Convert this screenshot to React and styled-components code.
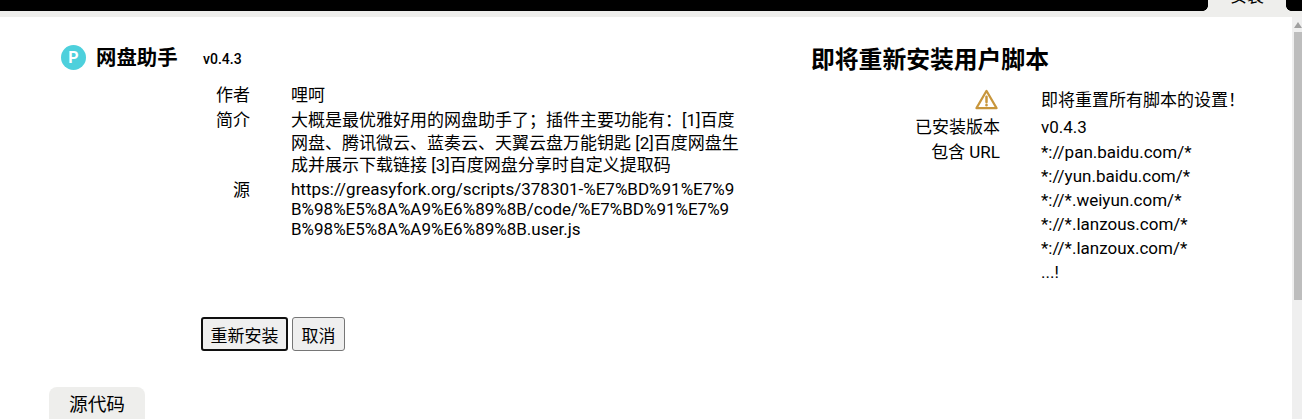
import React from "react";
import styled, { createGlobalStyle } from "styled-components";

const GlobalStyle = createGlobalStyle`
  html, body {
    margin: 0;
    height: 419px;
    overflow: hidden;
    background: #fff;
    color: #000;
    font-family: Roboto, "Noto Sans CJK SC", sans-serif;
    font-size: 17px;
  }
`;

const Page = styled.div`
  display: flex;
  flex-direction: column;
  height: 419px;
  overflow: hidden;
`;

const TopBar = styled.div`
  flex: none;
  height: 11px;
  background: #000;
  display: flex;
  justify-content: flex-end;
  padding-right: 16px;
`;

const TopTab = styled.div`
  position: relative;
  width: 78px;
  height: 11px;
  background: #eeeeec;
  text-align: center;
  line-height: 20px;

  &::before,
  &::after {
    content: "";
    position: absolute;
    bottom: 0;
    width: 5px;
    height: 5px;
  }
  &::before {
    left: -5px;
    background: radial-gradient(circle at 0 0, transparent 4.5px, #eeeeec 5px);
  }
  &::after {
    right: -5px;
    background: radial-gradient(circle at 100% 0, transparent 4.5px, #eeeeec 5px);
  }
`;

const TopTabLabel = styled.div`
  height: 11px;
  overflow: hidden;
  & > span {
    display: block;
    margin-top: -14px;
  }
`;

const Strip = styled.div`
  flex: none;
  height: 6px;
  background: #eeeeec;
`;

const Body = styled.div`
  flex: 1;
  display: flex;
  min-height: 0;
`;

const Main = styled.div`
  flex: 1;
  min-width: 0;
  padding-left: 49px;
`;

const Scrollbar = styled.div`
  flex: none;
  width: 10px;
  background: #efefef;
  display: flex;
  flex-direction: column;
  align-items: flex-end;
`;

const ScrollArrow = styled.div`
  height: 15px;
  width: 8px;
  display: flex;
  align-items: center;
  justify-content: center;
`;

const ScrollThumb = styled.div`
  width: 8px;
  height: 268px;
  background: #bdbdbd;
`;

const Columns = styled.div`
  display: flex;
  height: 370px;
`;

const LeftColumn = styled.div`
  width: 762px;
  flex: none;
  padding-top: 26px;
  padding-left: 12px;
  box-sizing: border-box;
`;

const TitleRow = styled.div`
  display: flex;
  align-items: center;
  height: 28px;
`;

const Logo = styled.div`
  width: 25px;
  height: 25px;
  border-radius: 50%;
  background: #4dd0dc;
  color: #fff;
  font-size: 16px;
  font-weight: 700;
  line-height: 25px;
  text-align: center;
  margin-right: 10px;
`;

const AppName = styled.div`
  font-size: 20.4px;
  font-weight: 700;
  width: 107px;
  margin-bottom: 2px;
`;

const Version = styled.div`
  font-size: 14px;
  font-weight: 500;
  margin-top: 3px;
`;

const InfoGrid = styled.div`
  display: grid;
  grid-template-columns: 189px 1fr;
  column-gap: 41px;
  row-gap: ${(p) => p.$rowGap}px;
  margin-top: ${(p) => p.$top}px;
`;

const Label = styled.div`
  text-align: right;
  line-height: ${(p) => p.$lineHeight || "22.5px"};
`;

const Value = styled.div`
  width: 450px;
  line-height: ${(p) => p.$lineHeight || "22.5px"};
  word-break: break-all;
`;

const UrlList = styled.div`
  display: flex;
  flex-direction: column;
  gap: 4px;
`;

const Actions = styled.div`
  display: flex;
  gap: 4px;
  margin-top: 78px;
  margin-left: 140px;
`;

const Button = styled.button`
  height: 34px;
  padding: 0 ${(p) => (p.$primary ? 7.5 : 8.5)}px;
  box-sizing: border-box;
  background: #efefef;
  border: ${(p) => (p.$primary ? "2px solid #101010" : "1px solid #767676")};
  border-radius: 3px;
  font: inherit;
  color: #000;
`;

const RightColumn = styled.div`
  flex: 1;
  min-width: 0;
  padding-top: 27px;
`;

const Heading = styled.h2`
  margin: 0;
  font-size: 23.8px;
  font-weight: 700;
  line-height: 32px;
`;

const Warning = styled.svg`
  display: block;
  width: 23px;
  height: 23px;
  margin-left: auto;
  margin-right: 2px;
  margin-bottom: 1px;
`;

const Tab = styled.div`
  width: 96px;
  height: 40px;
  background: #eeeeec;
  border-radius: 8px 8px 0 0;
  text-align: center;
  font-size: 18.7px;
  line-height: 37px;
`;

const urls = [
  "*://pan.baidu.com/*",
  "*://yun.baidu.com/*",
  "*://*.weiyun.com/*",
  "*://*.lanzous.com/*",
  "*://*.lanzoux.com/*",
  "...!",
];

export default function App() {
  return (
    <Page>
      <GlobalStyle />
      <TopBar>
        <TopTab>
          <TopTabLabel>
            <span>安装</span>
          </TopTabLabel>
        </TopTab>
      </TopBar>
      <Strip />
      <Body>
        <Main>
          <Columns>
            <LeftColumn>
              <TitleRow>
                <Logo>P</Logo>
                <AppName>网盘助手</AppName>
                <Version>v0.4.3</Version>
              </TitleRow>
              <InfoGrid $rowGap={2.5} $top={13}>
                <Label>作者</Label>
                <Value>哩呵</Value>
                <Label>简介</Label>
                <Value>
                  大概是最优雅好用的网盘助手了；插件主要功能有：[1]百度网盘、腾讯微云、蓝奏云、天翼云盘万能钥匙 [2]百度网盘生成并展示下载链接 [3]百度网盘分享时自定义提取码
                </Value>
                <Label>源</Label>
                <Value $lineHeight="20px">
                  https://greasyfork.org/scripts/378301-%E7%BD%91%E7%9B%98%E5%8A%A9%E6%89%8B/code/%E7%BD%91%E7%9B%98%E5%8A%A9%E6%89%8B.user.js
                </Value>
              </InfoGrid>
              <Actions>
                <Button $primary>重新安装</Button>
                <Button>取消</Button>
              </Actions>
            </LeftColumn>
            <RightColumn>
              <Heading>即将重新安装用户脚本</Heading>
              <InfoGrid $rowGap={5} $top={12}>
                <Label>
                  <Warning viewBox="0 0 24 24" fill="none" stroke="#c8963c" strokeWidth="2.2" strokeLinejoin="round">
                    <path d="M12 3 L22.5 21 H1.5 Z" />
                    <path d="M12 9 V14.5" strokeLinecap="round" strokeWidth="2.6" />
                    <path d="M12 17.6 V18" strokeLinecap="round" strokeWidth="2.6" />
                  </Warning>
                </Label>
                <Value $lineHeight="24px">即将重置所有脚本的设置！</Value>
                <Label $lineHeight="20px">已安装版本</Label>
                <Value $lineHeight="20px">v0.4.3</Value>
                <Label $lineHeight="20px">包含 URL</Label>
                <UrlList>
                  {urls.map((u) => (
                    <Value key={u} $lineHeight="20px">{u}</Value>
                  ))}
                </UrlList>
              </InfoGrid>
            </RightColumn>
          </Columns>
          <Tab>源代码</Tab>
        </Main>
        <Scrollbar>
          <ScrollArrow>
            <svg width="8" height="6" viewBox="0 0 8 6">
              <path d="M4 0 L8 6 H0 Z" fill="#a0a0a0" />
            </svg>
          </ScrollArrow>
          <ScrollThumb />
        </Scrollbar>
      </Body>
    </Page>
  );
}
